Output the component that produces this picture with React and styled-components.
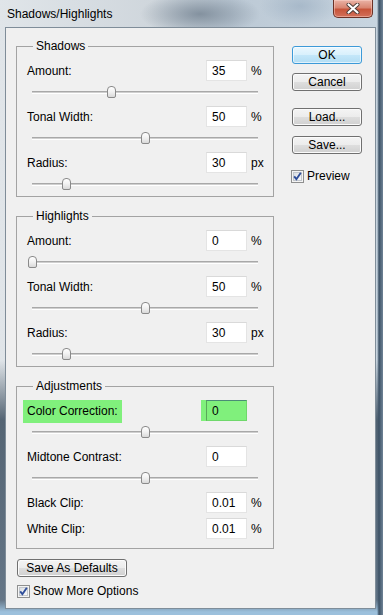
import React from 'react';
import styled, { createGlobalStyle } from 'styled-components';

const GlobalStyle = createGlobalStyle`
html, body {
    margin: 0;
    padding: 0;
}
body {
    width: 383px;
    height: 615px;
    overflow: hidden;
    font-family: "Liberation Sans", Arial, sans-serif;
    font-size: 12px;
    color: #000;
}
`;

const Frame = styled.div`
width: 383px;
height: 615px;
box-sizing: border-box;
display: flex;
flex-direction: column;
padding: 0 7px 6px 5px;
background:
    linear-gradient(90deg, transparent 377px, #3d5266 379px, #6f8396 383px),
    radial-gradient(ellipse 60px 22px at 200px 14px, rgba(110, 125, 140, 0.75), transparent),
    radial-gradient(ellipse 40px 20px at 300px 6px, rgba(150, 170, 190, 0.6), transparent),
    linear-gradient(180deg, transparent 360px, rgba(60, 78, 95, 0.85) 420px, rgba(70, 90, 110, 0.8) 600px, #9cc0dc 612px),
    linear-gradient(90deg, #e0e5e9 0%, #cfd6dc 40%, #bcc9d5 60%, #c8d5e0 100%);
`;

const TitleBar = styled.div`
height: 27px;
display: flex;
justify-content: space-between;
align-items: flex-start;
flex-shrink: 0;
`;

const Title = styled.div`
padding: 7px 0 0 2px;
line-height: 14px;
font-size: 12px;
color: #000;
`;

const CloseButton = styled.div`
width: 40px;
height: 18px;
box-sizing: border-box;
margin-right: 3px;
border: 1px solid #6b3126;
border-top: none;
border-radius: 0 0 5px 5px;
background: linear-gradient(180deg, #eab3a6 0%, #d98672 45%, #c7543a 55%, #d2705a 100%);
box-shadow: inset 0 0 0 1px rgba(255, 220, 210, 0.45);
display: flex;
align-items: center;
justify-content: center;
`;

const Client = styled.div`
flex: 1;
min-height: 0;
display: flex;
border: 1px solid #7f8d99;
background: #f0f0f0;
padding: 18px 0 0 10px;
`;

const LeftColumn = styled.div`
width: 258px;
display: flex;
flex-direction: column;
`;

const Groups = styled.div`
display: flex;
flex-direction: column;
gap: 19px;
`;

const Group = styled.div`
position: relative;
border: 1px solid #a3a3a3;
padding: 13px 0 ${p => p.$bottom || 0}px 0;
`;

const Legend = styled.div`
position: absolute;
top: -8px;
left: 16px;
padding: 0 3px;
line-height: 14px;
background: #f0f0f0;
`;

const Controls = styled.div`
display: flex;
flex-direction: column;
gap: 2px;
`;

const Clips = styled.div`
display: flex;
flex-direction: column;
gap: 5px;
`;

const Row = styled.div`
display: flex;
align-items: center;
height: 21px;
padding-left: 10px;
`;

const Label = styled.div`
flex: 1;
`;

const Marked = styled.span`
background: #80f07c;
padding: 4px 4px 5px 4px;
margin-left: -4px;
`;

const ValueBox = styled.input`
width: 41px;
height: 21px;
box-sizing: border-box;
margin: 0;
padding: 0 0 0 5px;
font: inherit;
color: #000;
outline: none;
border: 1px solid #e4e4e4;
border-top-color: #d9d9d9;
background: ${p => (p.$marked ? '#80f07c' : '#fff')};
${p => p.$marked && `
    border-color: #6fd86b;
    border-top-color: #4b8c76;
    border-left-color: #5aa85a;
    box-shadow: -5px 0 0 #80f07c;
`}
`;

const Unit = styled.div`
width: 26px;
box-sizing: border-box;
padding-left: 4px;
`;

const SliderRow = styled.div`
height: 23px;
box-sizing: border-box;
padding: 10px 0 0 15px;
`;

const Track = styled.div`
position: relative;
width: 226px;
height: 1px;
background: #cfcfcf;
border-top: 1px solid #a8a8a8;
border-bottom: 1px solid #fff;
`;

const Thumb = styled.div`
position: absolute;
top: -6px;
width: 9px;
height: 12px;
box-sizing: border-box;
border: 1px solid #8a8a8a;
border-radius: 4px 4px 2px 2px;
background: linear-gradient(180deg, #ffffff 0%, #f1f1f1 50%, #d9d9d9 100%);
`;

const Button = styled.div`
height: 18px;
width: ${p => p.$width || 70}px;
box-sizing: border-box;
flex-shrink: 0;
display: flex;
align-items: center;
justify-content: center;
border: 1px solid ${p => (p.$primary ? '#3c9ad8' : '#707070')};
border-radius: 3px;
background: ${p => (p.$primary
    ? 'linear-gradient(180deg, #eaf7fe 0%, #d8f0fc 50%, #c4e7f9 51%, #b2ddf4 100%)'
    : 'linear-gradient(180deg, #f4f4f4 0%, #ececec 50%, #dedede 51%, #d0d0d0 100%)')};
box-shadow: inset 0 0 0 1px ${p => (p.$primary ? 'rgba(255,255,255,0.6)' : '#fbfbfb')};
line-height: 14px;
margin-top: ${p => p.$top || 0}px;
margin-left: ${p => p.$left || 0}px;
`;

const RightColumn = styled.div`
width: 70px;
margin-left: 18px;
display: flex;
flex-direction: column;
`;

const CheckRow = styled.div`
display: flex;
align-items: center;
gap: 3px;
height: 13px;
line-height: 13px;
flex-shrink: 0;
margin-top: ${p => p.$top || 0}px;
margin-left: ${p => p.$left || 0}px;
`;

const CloseGlyph = () => (
    <svg width="14" height="11" viewBox="0 0 14 11">
        <path d="M2.5 1.5 L11.5 9.5 M11.5 1.5 L2.5 9.5" stroke="#4a3a36" strokeWidth="4" strokeLinecap="round" />
        <path d="M2.5 1.5 L11.5 9.5 M11.5 1.5 L2.5 9.5" stroke="#ffffff" strokeWidth="2.2" strokeLinecap="round" />
    </svg>
);

const CheckBox = () => (
    <svg width="13" height="13" viewBox="0 0 13 13">
        <defs>
            <linearGradient id="cbfill" x1="0" y1="0" x2="1" y2="1">
                <stop offset="0" stopColor="#d9dde2" />
                <stop offset="1" stopColor="#fbfbfb" />
            </linearGradient>
        </defs>
        <rect x="0.5" y="0.5" width="12" height="12" fill="#f4f4f4" stroke="#8e8f8f" />
        <rect x="2.5" y="2.5" width="8" height="8" fill="url(#cbfill)" stroke="#c3c7cc" />
        <path d="M3.2 6.4 L5.4 9.2 L9.8 2.8" fill="none" stroke="#2f4e9a" strokeWidth="1.9" />
    </svg>
);

const Field = ({ f }) => (
    <div>
        <Row>
            <Label>{f.marked ? <Marked>{f.label}</Marked> : f.label}</Label>
            <ValueBox readOnly value={f.value} $marked={f.marked} />
            <Unit>{f.unit}</Unit>
        </Row>
        {f.pos !== undefined && (
            <SliderRow>
                <Track>
                    <Thumb style={{ left: `calc(${f.pos * 100}% - 4px)` }} />
                </Track>
            </SliderRow>
        )}
    </div>
);

const shadows = [
    { label: 'Amount:', value: '35', unit: '%', pos: 0.35 },
    { label: 'Tonal Width:', value: '50', unit: '%', pos: 0.5 },
    { label: 'Radius:', value: '30', unit: 'px', pos: 0.15 },
];

const highlights = [
    { label: 'Amount:', value: '0', unit: '%', pos: 0 },
    { label: 'Tonal Width:', value: '50', unit: '%', pos: 0.5 },
    { label: 'Radius:', value: '30', unit: 'px', pos: 0.15 },
];

const adjustments = [
    { label: 'Color Correction:', value: '0', pos: 0.5, marked: true },
    { label: 'Midtone Contrast:', value: '0', pos: 0.5 },
];

const clips = [
    { label: 'Black Clip:', value: '0.01', unit: '%' },
    { label: 'White Clip:', value: '0.01', unit: '%' },
];

const App = () => {
    return (
        <Frame>
            <GlobalStyle />
            <TitleBar>
                <Title>Shadows/Highlights</Title>
                <CloseButton><CloseGlyph /></CloseButton>
            </TitleBar>
            <Client>
                <LeftColumn>
                    <Groups>
                        <Group>
                            <Legend>Shadows</Legend>
                            <Controls>
                                {shadows.map(f => <Field key={f.label} f={f} />)}
                            </Controls>
                        </Group>
                        <Group>
                            <Legend>Highlights</Legend>
                            <Controls>
                                {highlights.map(f => <Field key={f.label} f={f} />)}
                            </Controls>
                        </Group>
                        <Group $bottom={9}>
                            <Legend>Adjustments</Legend>
                            <Controls>
                                {adjustments.map(f => <Field key={f.label} f={f} />)}
                                <Clips>
                                    {clips.map(f => <Field key={f.label} f={f} />)}
                                </Clips>
                            </Controls>
                        </Group>
                    </Groups>
                    <Button $width={110} $top={10} $left={1}>Save As Defaults</Button>
                    <CheckRow $top={8} $left={1}>
                        <CheckBox />
                        <span>Show More Options</span>
                    </CheckRow>
                </LeftColumn>
                <RightColumn>
                    <Button $primary>OK</Button>
                    <Button $top={9}>Cancel</Button>
                    <Button $top={17}>Load...</Button>
                    <Button $top={10}>Save...</Button>
                    <CheckRow $top={16} $left={-1}>
                        <CheckBox />
                        <span>Preview</span>
                    </CheckRow>
                </RightColumn>
            </Client>
        </Frame>
    );
};

export default App;
